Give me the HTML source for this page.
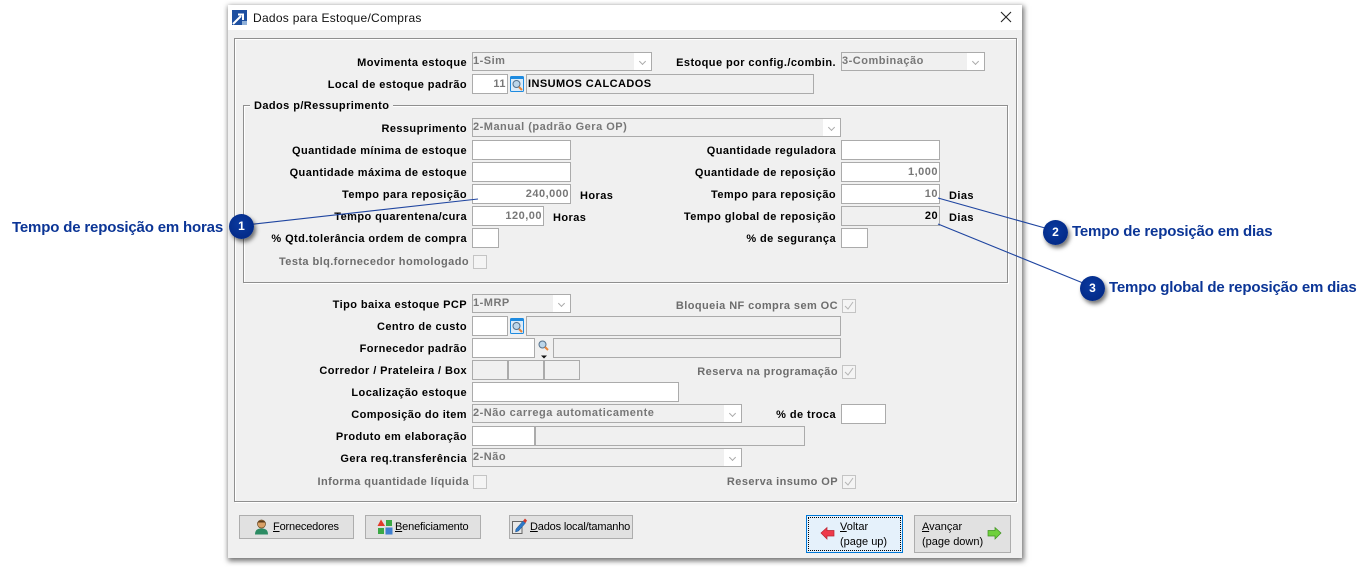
<!DOCTYPE html>
<html><head><meta charset="utf-8"><style>
html,body{margin:0;padding:0;background:#fff}
#p{position:relative;width:1372px;height:567px;overflow:hidden;background:#fff;font-family:"Liberation Sans",sans-serif}
#p div{position:absolute;box-sizing:border-box;white-space:nowrap}
.l{left:0;height:14px;line-height:14px;font-size:11px;letter-spacing:.42px;font-weight:700;color:#000;text-align:right;margin-top:1px}
.g{color:#6d6d6d}
.f{border:1px solid #ababab;background:#fff;height:20px}
.d{border:1px solid #ababab;background:#f0f0f0;height:20px;font-size:11px;letter-spacing:.42px;font-weight:700;line-height:18px;padding:0 1px;color:#000}
.c{border:1px solid #ababab;background:#f0f0f0;height:19px;font-size:11px;letter-spacing:.5px;font-weight:700;line-height:16px;padding:0;color:#777}
.c i{position:absolute;right:0;top:0;width:17px;height:17px;background:#fff}
.c i:after{content:"";position:absolute;left:6px;top:6px;width:4px;height:4px;border-right:1px solid #aaa;border-bottom:1px solid #aaa;transform:rotate(45deg)}
.r{font-size:11px;letter-spacing:.5px;font-weight:700;text-align:right;line-height:18px;padding-right:1px;color:#777}
.k{border:1px solid #c4c4c4;background:#f4f4f4;width:14px;height:14px}
.b{background:#e1e1e1;border:1px solid #adadad;font-family:"Liberation Sans",sans-serif;font-size:11px;letter-spacing:-.17px;color:#000;line-height:22px}
.n{width:25px;height:25px;border-radius:50%;background:radial-gradient(circle at 45% 40%,#0a3aa0,#00247e);color:#fff;font:700 12px/24px "Liberation Sans",sans-serif;text-align:center;box-shadow:2px 3px 4px rgba(0,0,0,.55)}
.t{font-family:"Liberation Sans",sans-serif;font-weight:700;font-size:15px;letter-spacing:-.17px;color:#0b3596;line-height:18px;margin-top:1px}
u{text-decoration:underline}
</style></head><body><div id="p">

<div style="left:228px;top:5px;width:794px;height:553px;background:#f0f0f0;box-shadow:1px 2px 5px 1px rgba(0,0,0,.55)"></div>
<div style="left:228px;top:5px;width:794px;height:25px;background:#fff"></div>
<svg style="position:absolute;left:232px;top:10px" width="15" height="15" viewBox="0 0 15 15"><rect width="15" height="15" fill="#1d4fa0"/><path d="M1 14L9 6M6 4.500H11V10" stroke="#fff" stroke-width="2" fill="none"/><rect x="10" y="11" width="5" height="4" fill="#8fb0d8"/></svg>
<div style="left:253px;top:10px;font:12px/16px 'Liberation Sans',sans-serif;letter-spacing:.28px;color:#111">Dados para Estoque/Compras</div>
<svg style="position:absolute;left:1000px;top:11px" width="12" height="12" viewBox="0 0 12 12"><path d="M1 1L11 11M11 1L1 11" stroke="#222" stroke-width="1.100"/></svg>

<div style="left:234px;top:38px;width:783px;height:464px;border:1px solid #8f8f8f;box-shadow:inset 1px 1px 0 #fff,1px 1px 0 #fff"></div>
<div style="left:243px;top:105px;width:765px;height:178px;border:1px solid #8f8f8f;box-shadow:inset 1px 1px 0 #fff,1px 1px 0 #fff"></div>
<div class="l" style="left:250px;top:98px;padding:0 4px;background:#f0f0f0">Dados p/Ressuprimento</div>

<div class="l" style="width:467px;top:55px">Movimenta estoque</div>
<div class="c" style="left:472px;top:52px;width:180px">1-Sim<i></i></div>
<div class="l" style="width:836px;top:55px">Estoque por config./combin.</div>
<div class="c" style="left:841px;top:52px;width:144px">3-Combinação<i></i></div>

<div class="l" style="width:467px;top:77px">Local de estoque padrão</div>
<div class="f r" style="left:472px;top:74px;width:36px">11</div>
<svg style="position:absolute;left:510px;top:76px" width="14" height="16" viewBox="0 0 14 16"><rect x=".5" y=".5" width="13" height="15" rx="1" fill="#dcecf9" stroke="#1e8be0"/><rect x="1" y="1" width="12" height="2" fill="#1e8be0"/><circle cx="6.500" cy="8" r="3.500" fill="#bcd6ea" stroke="#55718c"/><path d="M9 11L12 14" stroke="#e8853a" stroke-width="2"/></svg>
<div class="d" style="left:526px;top:74px;width:288px">INSUMOS CALCADOS</div>

<div class="l" style="width:467px;top:121px">Ressuprimento</div>
<div class="c" style="left:472px;top:118px;width:369px">2-Manual (padrão Gera OP)<i></i></div>

<div class="l" style="width:467px;top:143px">Quantidade mínima de estoque</div>
<div class="f" style="left:472px;top:140px;width:99px"></div>
<div class="l" style="width:836px;top:143px">Quantidade reguladora</div>
<div class="f" style="left:841px;top:140px;width:99px"></div>

<div class="l" style="width:467px;top:165px">Quantidade máxima de estoque</div>
<div class="f" style="left:472px;top:162px;width:99px"></div>
<div class="l" style="width:836px;top:165px">Quantidade de reposição</div>
<div class="f r" style="left:841px;top:162px;width:99px">1,000</div>

<div class="l" style="width:467px;top:187px">Tempo para reposição</div>
<div class="f r" style="left:472px;top:184px;width:99px">240,000</div>
<div class="l" style="left:580px;top:188px;text-align:left">Horas</div>
<div class="l" style="width:836px;top:187px">Tempo para reposição</div>
<div class="f r" style="left:841px;top:184px;width:99px">10</div>
<div class="l" style="left:949px;top:188px;text-align:left">Dias</div>

<div class="l" style="width:467px;top:209px">Tempo quarentena/cura</div>
<div class="f r" style="left:472px;top:206px;width:72px">120,00</div>
<div class="l" style="left:553px;top:210px;text-align:left">Horas</div>
<div class="l" style="width:836px;top:209px">Tempo global de reposição</div>
<div class="d" style="left:841px;top:206px;width:99px;text-align:right;padding-right:1px">20</div>
<div class="l" style="left:949px;top:210px;text-align:left">Dias</div>

<div class="l" style="width:467px;top:231px">% Qtd.tolerância ordem de compra</div>
<div class="f" style="left:472px;top:228px;width:27px"></div>
<div class="l" style="width:836px;top:231px">% de segurança</div>
<div class="f" style="left:841px;top:228px;width:27px"></div>

<div class="l g" style="width:469px;top:254px">Testa blq.fornecedor homologado</div>
<div class="k" style="left:473px;top:255px"></div>

<div class="l" style="width:467px;top:297px">Tipo baixa estoque PCP</div>
<div class="c" style="left:472px;top:294px;width:99px">1-MRP<i></i></div>
<div class="l g" style="width:838px;top:298px">Bloqueia NF compra sem OC</div>
<div class="k" style="left:842px;top:299px"></div>
<svg style="position:absolute;left:842px;top:299px" width="14" height="14"><path d="M3 7L6 10L11 3" stroke="#b5b5b5" fill="none"/></svg>

<div class="l" style="width:467px;top:319px">Centro de custo</div>
<div class="f" style="left:472px;top:316px;width:36px"></div>
<svg style="position:absolute;left:510px;top:318px" width="14" height="16" viewBox="0 0 14 16"><rect x=".5" y=".5" width="13" height="15" rx="1" fill="#dcecf9" stroke="#1e8be0"/><rect x="1" y="1" width="12" height="2" fill="#1e8be0"/><circle cx="6.500" cy="8" r="3.500" fill="#bcd6ea" stroke="#55718c"/><path d="M9 11L12 14" stroke="#e8853a" stroke-width="2"/></svg>
<div class="d" style="left:526px;top:316px;width:315px"></div>

<div class="l" style="width:467px;top:341px">Fornecedor padrão</div>
<div class="f" style="left:472px;top:338px;width:63px"></div>
<svg style="position:absolute;left:538px;top:340px" width="12" height="20" viewBox="0 0 12 20"><circle cx="4.500" cy="4.500" r="3.500" fill="#bcd6ea" stroke="#55718c"/><path d="M7 7L10 10" stroke="#e8853a" stroke-width="2"/><path d="M3 15.500H9L6 18.500Z" fill="#111"/></svg>
<div class="d" style="left:553px;top:338px;width:288px"></div>

<div class="l" style="width:467px;top:363px">Corredor / Prateleira / Box</div>
<div class="d" style="left:472px;top:360px;width:36px"></div>
<div class="d" style="left:508px;top:360px;width:36px"></div>
<div class="d" style="left:544px;top:360px;width:36px"></div>
<div class="l g" style="width:838px;top:364px">Reserva na programação</div>
<div class="k" style="left:842px;top:365px"></div>
<svg style="position:absolute;left:842px;top:365px" width="14" height="14"><path d="M3 7L6 10L11 3" stroke="#b5b5b5" fill="none"/></svg>

<div class="l" style="width:467px;top:385px">Localização estoque</div>
<div class="f" style="left:472px;top:382px;width:207px"></div>

<div class="l" style="width:467px;top:407px">Composição do item</div>
<div class="c" style="left:472px;top:404px;width:270px">2-Não carrega automaticamente<i></i></div>
<div class="l" style="width:836px;top:407px">% de troca</div>
<div class="f" style="left:841px;top:404px;width:45px"></div>

<div class="l" style="width:467px;top:429px">Produto em elaboração</div>
<div class="f" style="left:472px;top:426px;width:63px"></div>
<div class="d" style="left:535px;top:426px;width:270px"></div>

<div class="l" style="width:467px;top:451px">Gera req.transferência</div>
<div class="c" style="left:472px;top:448px;width:270px">2-Não<i></i></div>

<div class="l g" style="width:469px;top:474px">Informa quantidade líquida</div>
<div class="k" style="left:473px;top:475px"></div>
<div class="l g" style="width:838px;top:474px">Reserva insumo OP</div>
<div class="k" style="left:842px;top:475px"></div>
<svg style="position:absolute;left:842px;top:475px" width="14" height="14"><path d="M3 7L6 10L11 3" stroke="#b5b5b5" fill="none"/></svg>

<div class="b" style="left:239px;top:515px;width:115px;height:24px;padding-left:33px"><u>F</u>ornecedores</div>
<svg style="position:absolute;left:254px;top:519px" width="15" height="16" viewBox="0 0 15 16"><circle cx="7.500" cy="5" r="4" fill="#d9a066" stroke="#6b4a22" stroke-width=".7"/><path d="M3.500 3.500C5 1 10 1 11.500 3.500Z" fill="#5a3a18"/><path d="M1 15.500C1 10.500 4 9.500 7.500 9.500S14 10.500 14 15.500Z" fill="#2c8b63"/></svg>
<div class="b" style="left:365px;top:515px;width:116px;height:24px;padding-left:29px"><u>B</u>eneficiamento</div>
<svg style="position:absolute;left:377px;top:519px" width="16" height="16" viewBox="0 0 16 16"><path d="M4 0.500L8 7H0.500Z" fill="#e23a2a"/><rect x="9" y="1" width="6" height="6" fill="#3aa845"/><rect x="1" y="9" width="6" height="6" fill="#3aa845"/><rect x="8.500" y="8.500" width="7" height="7" fill="#3f7fd0"/></svg>
<div class="b" style="left:509px;top:515px;width:124px;height:24px;padding-left:20px"><u>D</u>ados local/tamanho</div>
<svg style="position:absolute;left:511px;top:517px" width="16" height="18" viewBox="0 0 16 18"><path d="M1.500 4.500H11V16.500H1.500Z" fill="#e8e8e8" stroke="#666"/><path d="M5 12L12 4L14.500 6L7.500 14L4.500 15Z" fill="#2d78c8" stroke="#1d4f88" stroke-width=".5"/><path d="M12 4L14 1.500L16 3.500L14.500 6Z" fill="#d23a2a"/></svg>

<div style="left:806px;top:515px;width:97px;height:38px;background:#e5f1fb;border:1px solid #0078d7"></div>
<div style="left:808px;top:517px;width:93px;height:34px;border:1px dotted #000"></div>
<div style="left:840px;top:520px;font:11px/15px 'Liberation Sans',sans-serif;color:#000"><u>V</u>oltar<br>(page up)</div>
<svg style="position:absolute;left:820px;top:526px" width="15" height="14" viewBox="0 0 15 14"><path d="M1 7L7 1.500V4.500H14V10H7V13Z" fill="#ee3a4a" stroke="#b8232f" stroke-width=".7"/></svg>
<div style="left:914px;top:515px;width:97px;height:38px;background:#e1e1e1;border:1px solid #adadad"></div>
<div style="left:922px;top:520px;font:11px/15px 'Liberation Sans',sans-serif;color:#000"><u>A</u>vançar<br>(page down)</div>
<svg style="position:absolute;left:987px;top:526px" width="15" height="14" viewBox="0 0 15 14"><path d="M14 7L8 1.500V4.500H1V10H8V13Z" fill="#6fd03c" stroke="#3f8f22" stroke-width=".7"/></svg>

<svg style="position:absolute;left:0;top:0" width="1372" height="567"><path d="M250 224.500L478 199M938 198L1045 228M938 224L1083 283" stroke="#1f45a0" stroke-width="1.100" fill="none"/></svg>
<div class="t" style="left:12px;top:218px">Tempo de reposição em horas</div>
<div class="n" style="left:229px;top:214px">1</div>
<div class="n" style="left:1043px;top:220px">2</div>
<div class="t" style="left:1072px;top:222px">Tempo de reposição em dias</div>
<div class="n" style="left:1080px;top:276px">3</div>
<div class="t" style="left:1109px;top:278px">Tempo global de reposição em dias</div>
</div></body></html>
